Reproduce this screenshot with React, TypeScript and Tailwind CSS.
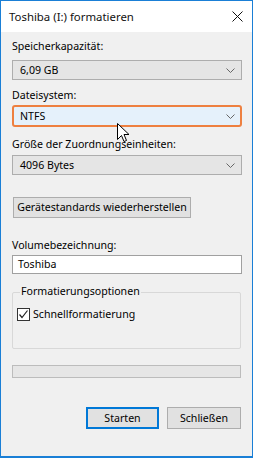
import React from "react";

const Chevron = () => (
  <svg width="9" height="5" viewBox="0 0 9 5" className="shrink-0">
    <path d="M0.5 0.5 L4.5 4.5 L8.5 0.5" fill="none" stroke="#666" strokeWidth="1" />
  </svg>
);

const Combo = ({ value, hot }: { value: string; hot?: boolean }) => (
  <div
    className={
      hot
        ? "w-[230px] h-[22px] flex items-center justify-between pl-[6px] pr-[5px] bg-[#e5f1fb] border-2 border-[#ee8040] rounded-[3px]"
        : "w-[230px] h-[20px] flex items-center justify-between pl-[7px] pr-[6px] bg-[#e5e5e5] border border-[#adadad]"
    }
  >
    <span className="leading-[15px]">{value}</span>
    <Chevron />
  </div>
);

export default function App() {
  return (
    <div
      className="relative w-[253px] h-[458px] border-x border-t border-b-2 border-[#1a7fd6] bg-[#f0f0f0] text-[10.6px] text-black flex flex-col"
      style={{ fontFamily: '"Noto Sans", "Liberation Sans", sans-serif' }}
    >
      <div className="h-[31px] bg-white flex items-center justify-between pl-[8px] pr-[9px]">
        <span className="text-[11.4px] leading-[15px] text-[#111]">Toshiba (I:) formatieren</span>
        <svg width="11" height="11" viewBox="0 0 11 11">
          <path d="M0.5 0.5 L10.5 10.5 M10.5 0.5 L0.5 10.5" stroke="#111" strokeWidth="1" />
        </svg>
      </div>
      <div className="flex flex-col pl-[11px] pt-[7px]">
        <div className="leading-[15px]">Speicherkapazität:</div>
        <div className="mt-[6px]">
          <Combo value="6,09 GB" />
        </div>
        <div className="mt-[8px] leading-[15px]">Dateisystem:</div>
        <div className="mt-[2px]">
          <Combo value="NTFS" hot />
        </div>
        <div className="mt-[10px] leading-[15px]">Größe der Zuordnungseinheiten:</div>
        <div className="mt-[3px]">
          <Combo value="4096 Bytes" />
        </div>
        <div className="mt-[22px]">
          <div className="w-[178px] h-[21px] ml-[1px] flex items-center justify-center bg-[#e1e1e1] border border-[#adadad] leading-[15px] whitespace-nowrap">
            Gerätestandards wiederherstellen
          </div>
        </div>
        <div className="mt-[20px] leading-[15px]">Volumebezeichnung:</div>
        <div className="mt-[2px] w-[230px] h-[19px] bg-white border border-[#a0a0a0] flex items-center pl-[5px] leading-[15px]">
          Toshiba
        </div>
        <div className="relative mt-[18px] w-[229px] h-[57px] border border-[#d8d8d8] rounded-[2px]">
          <span className="absolute left-[7px] top-[-9px] bg-[#f0f0f0] px-[1px] leading-[15px]">
            Formatierungsoptionen
          </span>
          <div className="flex items-center mt-[14px] ml-[4px] gap-[3px]">
            <div className="w-[13px] h-[13px] bg-white border border-[#333] flex items-center justify-center">
              <svg width="11" height="11" viewBox="0 0 11 11">
                <path d="M1.5 5.5 L4 8.5 L9.5 1.5" fill="none" stroke="#222" strokeWidth="1.2" />
              </svg>
            </div>
            <span className="leading-[15px]">Schnellformatierung</span>
          </div>
        </div>
        <div className="mt-[16px] w-[229px] h-[13px] bg-[#e6e6e6] border border-[#bcbcbc]" />
        <div className="mt-[29px] flex gap-[8px] pl-[74px]">
          <div className="w-[73px] h-[22px] flex items-center justify-center bg-[#e1e1e1] border-2 border-[#0078d7] leading-[15px]">
            Starten
          </div>
          <div className="w-[74px] h-[22px] flex items-center justify-center bg-[#e1e1e1] border border-[#adadad] leading-[15px]">
            Schließen
          </div>
        </div>
      </div>
      <svg
        className="absolute left-[116px] top-[122px]"
        width="13"
        height="20"
        viewBox="0 0 13 20"
      >
        <path
          d="M0.5 0.5 L0.5 16.5 L4.5 12.5 L7 18.5 L9.5 17.5 L7 11.5 L12 11.5 Z"
          fill="white"
          stroke="black"
          strokeWidth="1"
          strokeLinejoin="round"
        />
      </svg>
    </div>
  );
}
